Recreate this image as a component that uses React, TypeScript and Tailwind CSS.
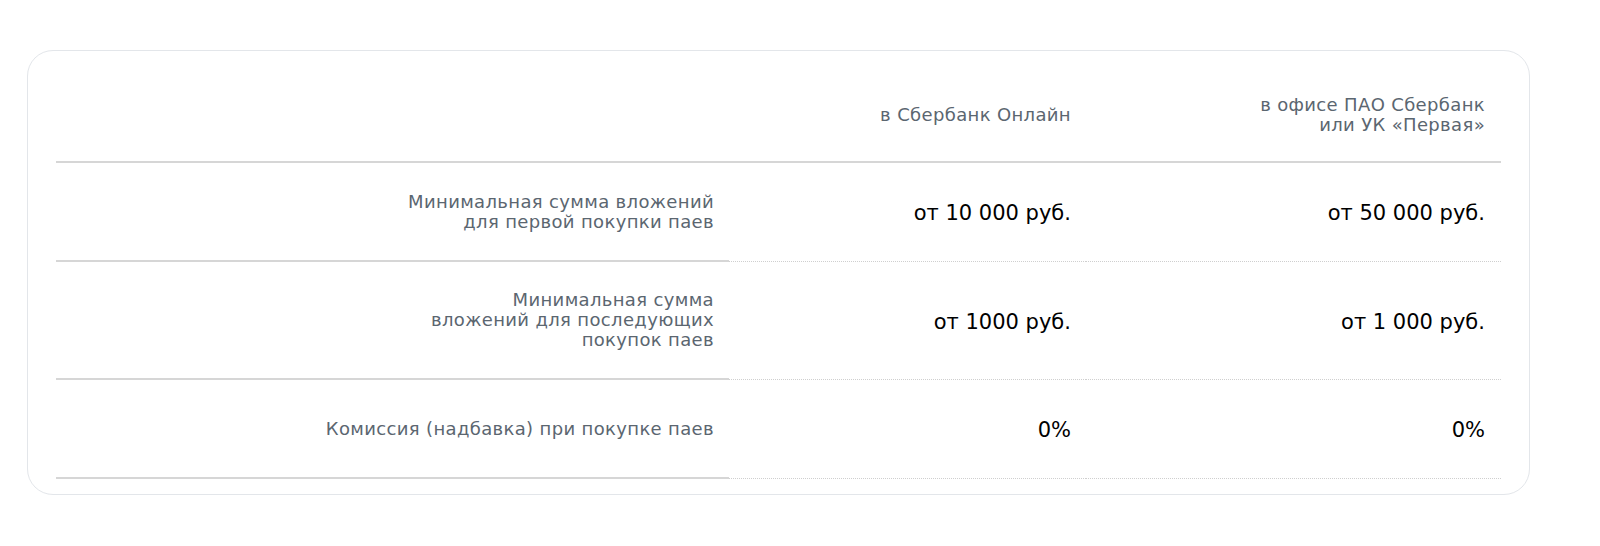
import React from 'react';

const rows = [
  {
    label: ['Минимальная сумма вложений', 'для первой покупки паев'],
    online: 'от 10 000 руб.',
    office: 'от 50 000 руб.',
  },
  {
    label: ['Минимальная сумма', 'вложений для последующих', 'покупок паев'],
    online: 'от 1000 руб.',
    office: 'от 1 000 руб.',
  },
  {
    label: ['Комиссия (надбавка) при покупке паев'],
    online: '0%',
    office: '0%',
  },
];

export default function App() {
  return (
    <div className="min-h-[546px] bg-white pt-[50px] pl-[27px] font-['DejaVu_Sans',sans-serif]">
      <div className="w-[1503px] rounded-[26px] border border-[#e3e6ea] px-[28px] pt-[18px] pb-[15px]">
        <div className="grid grid-cols-[673px_357px_415px]">
          {/* header */}
          <div className="h-[94px] border-b-2 border-[#d6d6d6]" />
          <div className="flex h-[94px] items-center justify-end border-b-2 border-[#d6d6d6] pr-[15px] text-right text-[18px] leading-[20px] tracking-[0.35px] text-[#5b6670]">
            в Сбербанк Онлайн
          </div>
          <div className="flex h-[94px] items-center justify-end border-b-2 border-[#d6d6d6] pr-[16px] text-right text-[18px] leading-[20px] tracking-[0.35px] text-[#5b6670]">
            <span>
              в офисе ПАО Сбербанк
              <br />
              или УК «Первая»
            </span>
          </div>

          {rows.map((r, i) => (
            <React.Fragment key={i}>
              <div className="flex min-h-[99px] items-center justify-end border-b-2 border-[#d6d6d6] py-[28px] pr-[15px] text-right text-[18px] leading-[20px] tracking-[0.35px] text-[#5b6670]">
                <span>
                  {r.label.map((l, j) => (
                    <React.Fragment key={j}>
                      {j > 0 && <br />}
                      {l}
                    </React.Fragment>
                  ))}
                </span>
              </div>
              <div className="flex min-h-[99px] items-center justify-end border-b border-dotted border-[#cfcfcf] pt-[4px] pr-[15px] text-[21px] text-black">
                {r.online}
              </div>
              <div className="flex min-h-[99px] items-center justify-end border-b border-dotted border-[#cfcfcf] pt-[4px] pr-[16px] text-[21px] text-black">
                {r.office}
              </div>
            </React.Fragment>
          ))}
        </div>
      </div>
    </div>
  );
}
